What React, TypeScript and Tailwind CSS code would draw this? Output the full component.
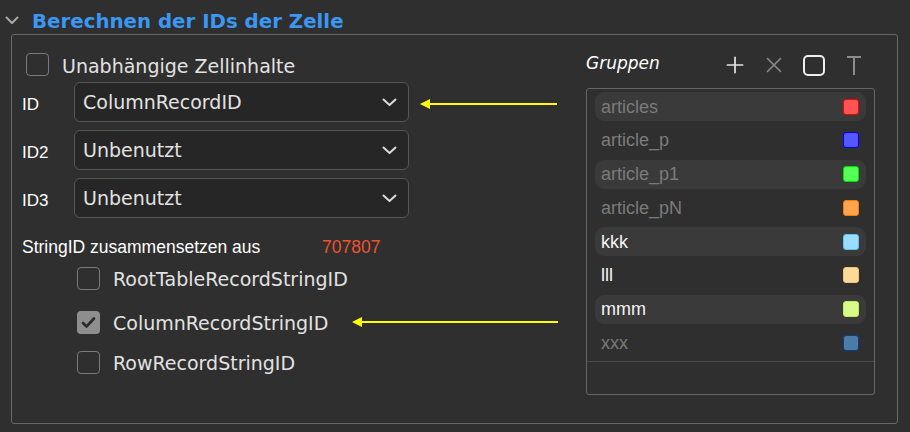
import { Plus, X } from 'lucide-react'

const groups = [
  { name: 'articles', fill: 'bg-[#ff5454]', edge: 'border-[#f00000]', lit: false, band: true },
  { name: 'article_p', fill: 'bg-[#5656ff]', edge: 'border-[#0000e6]', lit: false, band: false },
  { name: 'article_p1', fill: 'bg-[#56ff56]', edge: 'border-[#00e000]', lit: false, band: true },
  { name: 'article_pN', fill: 'bg-[#ffa64f]', edge: 'border-[#ff7800]', lit: false, band: false },
  { name: 'kkk', fill: 'bg-[#9adcff]', edge: 'border-[#62c0f5]', lit: true, band: true },
  { name: 'lll', fill: 'bg-[#fbd996]', edge: 'border-[#f6c46e]', lit: true, band: false },
  { name: 'mmm', fill: 'bg-[#d7fa88]', edge: 'border-[#bdf05e]', lit: true, band: true },
  { name: 'xxx', fill: 'bg-[#4b7bab]', edge: 'border-[#0d3d7a]', lit: false, band: false },
]

function Check({ checked }: { checked?: boolean }) {
  if (checked) {
    return (
      <div className="w-[23px] h-[23px] rounded-[4px] bg-[#8e8e8e] flex items-center justify-center shrink-0">
        <svg width="15" height="13" viewBox="0 0 15 13">
          <polyline points="2,7 5.5,10.5 13,2.5" fill="none" stroke="#2a2a2a" strokeWidth="2.6" strokeLinecap="round" strokeLinejoin="round" />
        </svg>
      </div>
    )
  }
  return <div className="w-[23px] h-[23px] rounded-[4px] border-[1.5px] border-[#7a7a7a] shrink-0" />
}

function Select({ label, value }: { label: string; value: string }) {
  return (
    <div className="flex items-center h-[40px]">
      <span className="w-[52px] text-[17px] text-white font-['Liberation_Sans',Arial,sans-serif] pt-[5px]">{label}</span>
      <div className="w-[335px] h-[40px] rounded-[6px] border-[1.5px] border-[#575757] bg-[#262626] flex items-center justify-between pl-[8px] pr-[11px]">
        <span className="text-[19px] text-[#e2e2e2] font-['DejaVu_Sans',sans-serif] pt-[1px]">{value}</span>
        <svg width="15" height="9" viewBox="0 0 15 9">
          <polyline points="1.5,1.5 7.5,7 13.5,1.5" fill="none" stroke="#dcdcdc" strokeWidth="2" strokeLinecap="round" strokeLinejoin="round" />
        </svg>
      </div>
    </div>
  )
}

function Arrow({ className, width }: { className: string; width: number }) {
  return (
    <svg className={className} width={width} height="16" viewBox={`0 0 ${width} 16`}>
      <line x1="10" y1="8" x2={width - 2} y2="8" stroke="#ffff00" strokeWidth="2.2" />
      <polygon points="2,8 12,3 12,13" fill="#ffff00" />
    </svg>
  )
}

export default function App() {
  return (
    <div className="relative w-[910px] h-[432px] bg-[#2f2f2f] overflow-hidden select-none">
      {/* Section header */}
      <div className="flex items-center h-[34px] pt-[6px]">
        <svg className="ml-[5px]" width="14" height="9" viewBox="0 0 14 9">
          <polyline points="1.5,1.5 7,7 12.5,1.5" fill="none" stroke="#a9a9a9" strokeWidth="2" strokeLinecap="round" strokeLinejoin="round" />
        </svg>
        <h2 className="ml-[13px] mt-[3px] text-[19.8px] font-bold text-[#3b97f2] font-['DejaVu_Sans',sans-serif] leading-none">
          Berechnen der IDs der Zelle
        </h2>
      </div>

      {/* Panel */}
      <div className="ml-[11px] w-[887px] h-[390px] border-[1.5px] border-[#686868] rounded-[3px] flex">
        {/* Left column */}
        <div className="w-[574px] pl-[10px] pt-[18px] flex flex-col">
          <div className="flex items-center h-[23px] ml-[4px] gap-[13px]">
            <Check />
            <span className="text-[19px] text-[#e2e2e2] font-['DejaVu_Sans',sans-serif] pt-[3px]">Unabhängige Zellinhalte</span>
          </div>
          <div className="mt-[6px] flex flex-col gap-[8px]">
            <Select label="ID" value="ColumnRecordID" />
            <Select label="ID2" value="Unbenutzt" />
            <Select label="ID3" value="Unbenutzt" />
          </div>
          <div className="mt-[19px] h-[20px] flex items-center text-[17.5px] font-['Liberation_Sans',Arial,sans-serif]">
            <span className="w-[300px] text-white">StringID zusammensetzen aus</span>
            <span className="text-[#f0522c]">707807</span>
          </div>
          <div className="ml-[55px] flex flex-col">
            {[
              { t: 'RootTableRecordStringID', c: false, m: 'mt-[10px]' },
              { t: 'ColumnRecordStringID', c: true, m: 'mt-[21px]' },
              { t: 'RowRecordStringID', c: false, m: 'mt-[17px]' },
            ].map((r) => (
              <div key={r.t} className={`${r.m} flex items-center h-[23px] gap-[13px]`}>
                <Check checked={r.c} />
                <span className="text-[19px] text-[#e2e2e2] font-['DejaVu_Sans',sans-serif] pt-[2px]">{r.t}</span>
              </div>
            ))}
          </div>
        </div>

        {/* Right column: groups */}
        <div className="w-[289px] pt-[17px] flex flex-col">
          <div className="flex items-center h-[26px]">
            <span className="italic text-[17px] text-white font-['DejaVu_Sans',sans-serif] -mt-[3px]">Gruppen</span>
            <div className="ml-auto mr-[13px] flex items-center">
              <Plus size={26} strokeWidth={1.6} className="text-[#e4e4e4] -mx-[2px]" />
              <X size={26} strokeWidth={1.5} className="text-[#8a8a8a] ml-[15px] -mr-[3px]" />
              <div className="ml-[19px] w-[22px] h-[21px] rounded-[5px] border-2 border-[#eeeeee]" />
              <svg className="ml-[21px]" width="16" height="20" viewBox="0 0 16 20">
                <line x1="1" y1="2" x2="15" y2="2" stroke="#8c8c8c" strokeWidth="2" />
                <line x1="8" y1="2" x2="8" y2="20" stroke="#8c8c8c" strokeWidth="2" />
              </svg>
            </div>
          </div>
          <div className="mt-[10px] h-[307px] border-[1.5px] border-[#666666] rounded-[3px] flex flex-col pt-[3px]">
            <div className="px-[8px] flex flex-col gap-[4.8px]">
              {groups.map((g) => (
                <div
                  key={g.name}
                  className={`h-[29px] rounded-[9px] flex items-center justify-between pl-[6px] pr-[7px] ${g.band ? 'bg-[#3a3a3a]' : ''}`}
                >
                  <span className={`text-[18px] font-['Liberation_Sans',Arial,sans-serif] pt-[1px] ${g.lit ? 'text-[#f4f4f4]' : 'text-[#7b7b7b]'}`}>
                    {g.name}
                  </span>
                  <div className={`w-[16px] h-[16px] rounded-[3px] border-[1.5px] ${g.fill} ${g.edge}`} />
                </div>
              ))}
            </div>
            <div className="mt-[3px] h-px bg-[#4a4a4a]" />
          </div>
        </div>
      </div>

      {/* Annotation arrows */}
      <Arrow className="absolute left-[418px] top-[96px]" width={141} />
      <Arrow className="absolute left-[350px] top-[314px]" width={210} />
    </div>
  )
}
